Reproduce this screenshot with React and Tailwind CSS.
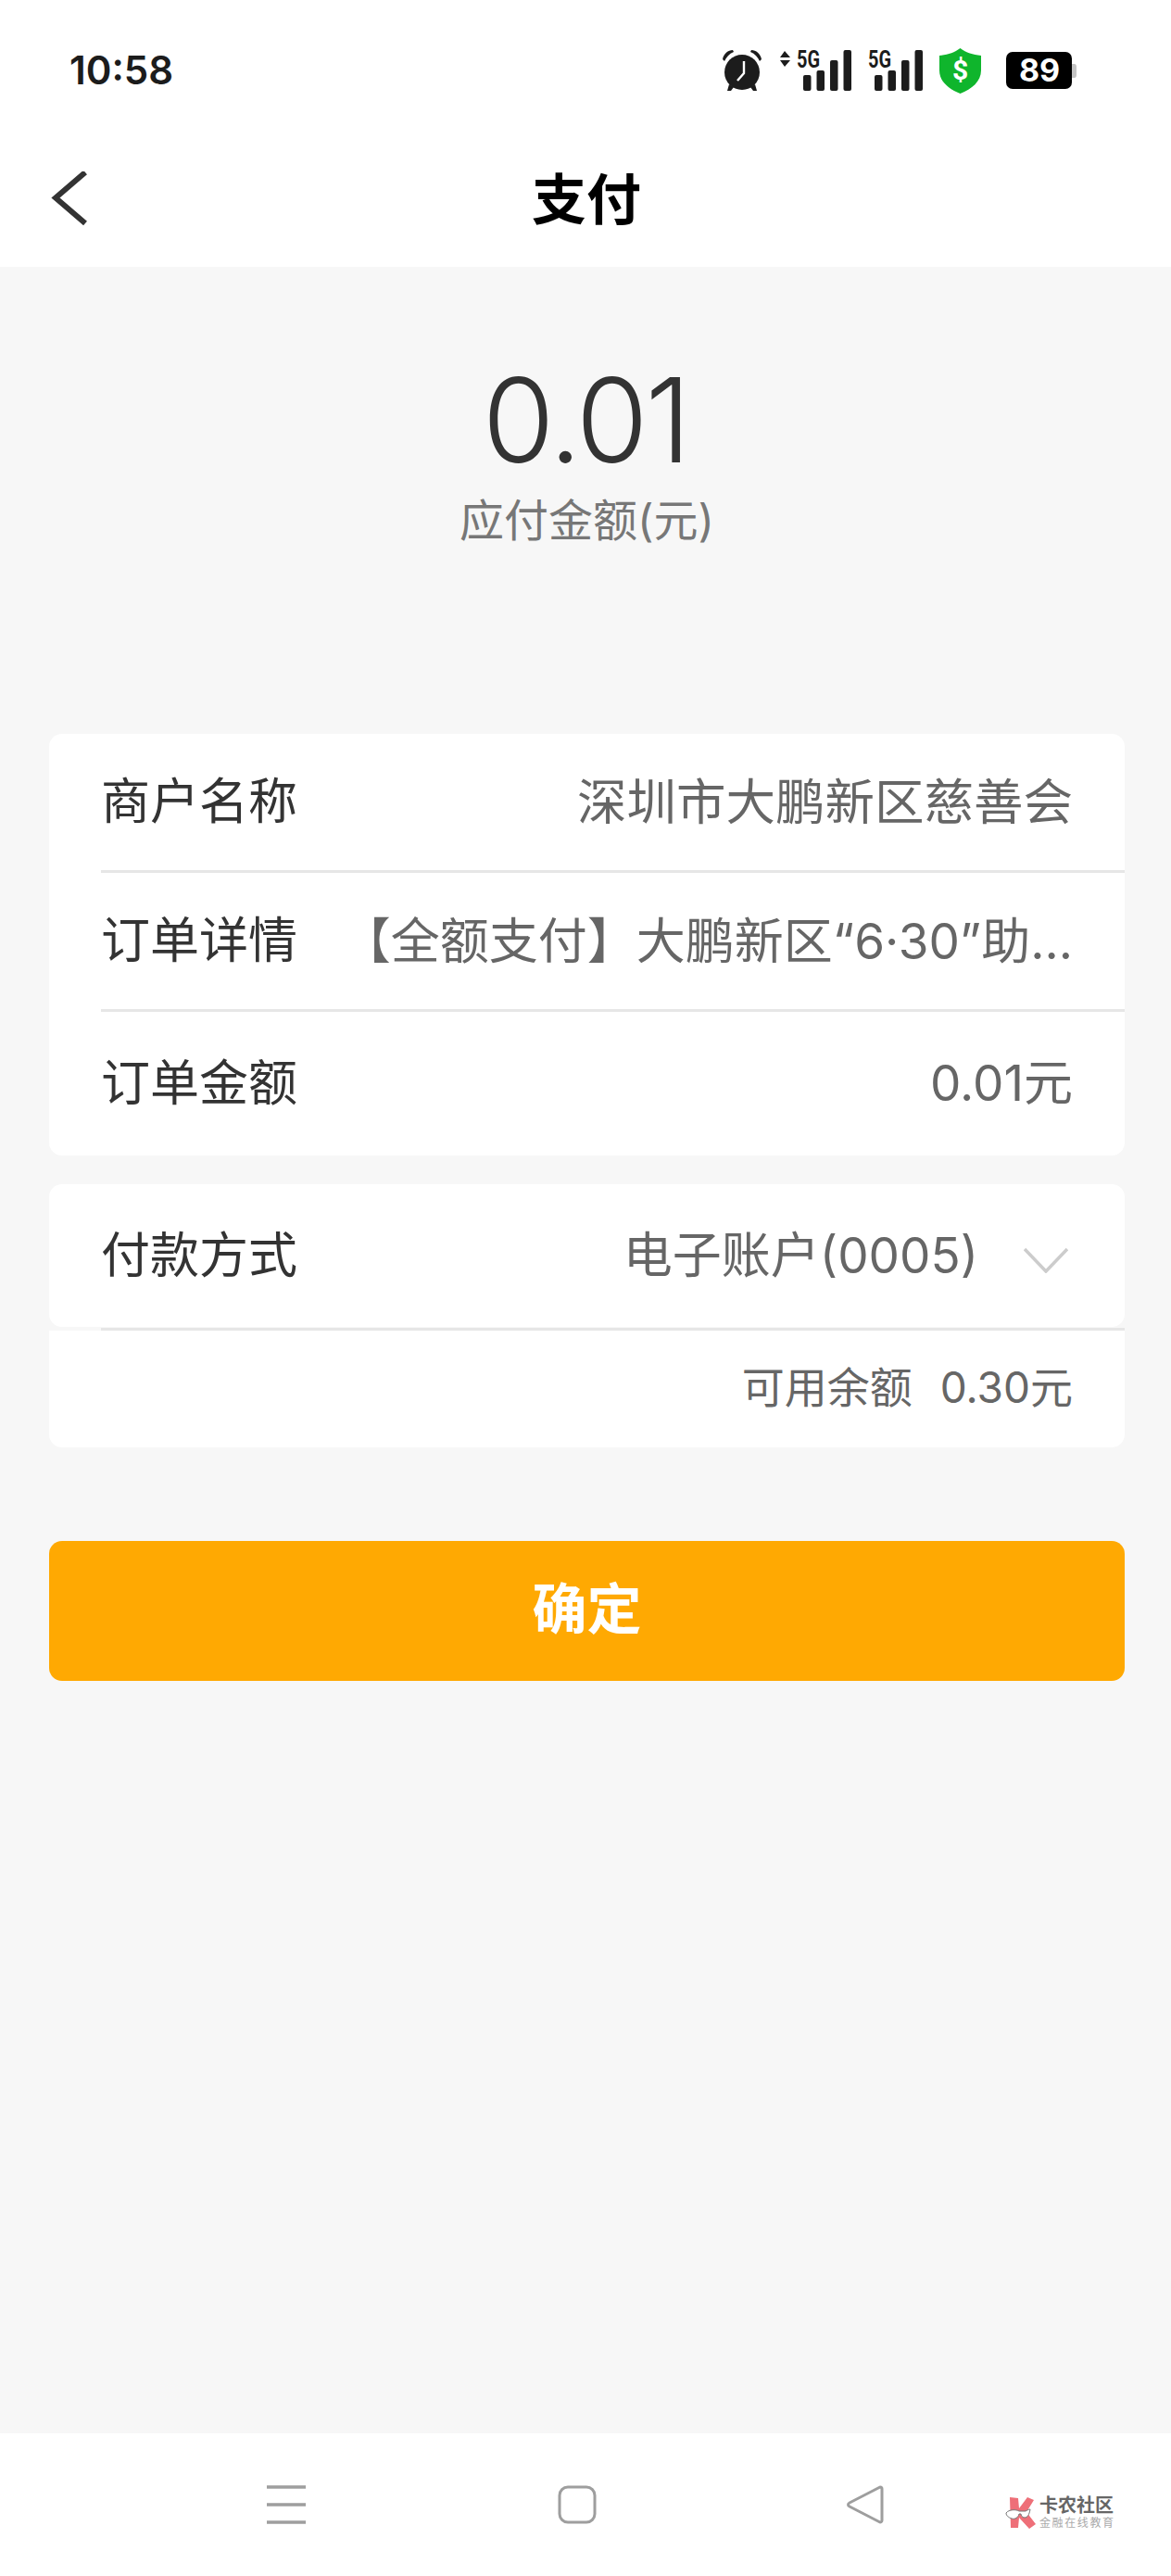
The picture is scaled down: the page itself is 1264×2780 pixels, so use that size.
const cjk = "font-['Inter','Noto_Sans_CJK_SC',sans-serif]";

function Alarm() {
  return (
    <svg width="44" height="46" viewBox="0 0 44 46" className="shrink-0">
      <circle cx="22" cy="25" r="19" fill="#1c1c1c" />
      <path d="M1 11 C2 5 7 1 12 1 L13 3 C8 5 5 9 3 13 Z" fill="#1c1c1c" />
      <path d="M43 11 C42 5 37 1 32 1 L31 3 C36 5 39 9 41 13 Z" fill="#1c1c1c" />
      <path d="M8 38 L6 45 L10 45 L13 41 Z M36 38 L38 45 L34 45 L31 41 Z" fill="#1c1c1c" />
      <path d="M24 13 L24 26 L17 34" fill="none" stroke="#fff" strokeWidth="2.4" />
    </svg>
  );
}

function Signal({ arrows }) {
  return (
    <svg width={arrows ? 77 : 59} height="52" viewBox={arrows ? "-18 -8 77 52" : "0 -8 59 52"} className="-mt-[8px] shrink-0">
      {arrows && <path d="M-13 1 L-7 8 L-18 8 Z M-18 11 L-7 11 L-13 18 Z" fill="#1c1c1c" />}
      <text x="0" y="19" fontFamily="Roboto, sans-serif" fontSize="25" fontWeight="700" fill="#1c1c1c" textLength="25" lengthAdjust="spacingAndGlyphs">
        5G
      </text>
      <rect x="7" y="27" width="8.5" height="17" rx="2" fill="#1c1c1c" />
      <rect x="21.5" y="22" width="8.5" height="22" rx="2" fill="#1c1c1c" />
      <rect x="36" y="11" width="8.5" height="33" rx="2" fill="#1c1c1c" />
      <rect x="50.5" y="0" width="8.5" height="44" rx="2" fill="#1c1c1c" />
    </svg>
  );
}

function Shield() {
  return (
    <svg width="45" height="49" viewBox="0 0 45 49" className="shrink-0">
      <path d="M22.5 0 C29 5 36 7 45 8 L45 24 C45 36 35 44 22.5 49 C10 44 0 36 0 24 L0 8 C9 7 16 5 22.5 0 Z" fill="#0fb52c" />
      <text x="22.5" y="34" textAnchor="middle" fontFamily="Roboto, sans-serif" fontSize="30" fontWeight="700" fill="#fff">
        $
      </text>
    </svg>
  );
}

function Battery() {
  return (
    <svg width="77" height="40" viewBox="0 0 77 40" className="shrink-0">
      <path d="M70 13 L73 13 C76 13 76 15 76 17 L76 24 C76 26 76 28 73 28 L70 28 Z" fill="#c4c4c4" />
      <rect x="0" y="0" width="71" height="40" rx="7" fill="#000" />
      <text x="36" y="32" textAnchor="middle" fontFamily="Inter, sans-serif" fontSize="34" fontWeight="700" fill="#fff">
        89
      </text>
    </svg>
  );
}

function Row({ label, height, children }) {
  return (
    <div className={`flex items-center px-[56px] ${height}`}>
      <span className="shrink-0 text-[53px] leading-none text-[#333]">{label}</span>
      {children}
    </div>
  );
}

function Divider() {
  return <div className="ml-[56px] h-[3px] bg-[#e6e6e6]" />;
}

export default function App() {
  return (
    <div className={`relative flex h-[2780px] w-[1264px] flex-col bg-[#f7f7f7] ${cjk}`}>
      <header className="h-[288px] shrink-0 bg-white">
        <div className="flex h-[152px] items-center pr-[101px] pl-[75px]">
          <span className="text-[42px] leading-none font-semibold text-[#1c1c1c]">10:58</span>
          <div className="ml-auto flex items-center">
            <Alarm />
            <div className="ml-[19px]">
              <Signal arrows />
            </div>
            <div className="ml-[18px]">
              <Signal />
            </div>
            <div className="ml-[18px]">
              <Shield />
            </div>
            <div className="ml-[27px]">
              <Battery />
            </div>
          </div>
        </div>
        <div className="flex h-[136px] items-center pb-[10px] pl-[54px]">
          <svg width="42" height="60" viewBox="0 0 42 60" fill="none" className="shrink-0">
            <path d="M38 1 L6 28.5 L38 56" stroke="#333" strokeWidth="6" />
          </svg>
          <h1 className="ml-[478px] text-[59px] leading-none font-bold text-black">支付</h1>
        </div>
      </header>

      <section className="flex h-[504px] shrink-0 flex-col items-center pt-[90px]">
        <div className="text-[126px] leading-[150px] font-light tracking-[-3px] text-[#333]">0.01</div>
        <div className="mt-[10px] pl-[3px] text-[48px] leading-none text-[#777]">应付金额(元)</div>
      </section>

      <div className="mr-[50px] ml-[53px] rounded-[14px] bg-white">
        <Row label="商户名称" height="h-[147px]">
          <span className="ml-auto text-[53.5px] leading-none text-[#666]">深圳市大鹏新区慈善会</span>
        </Row>
        <Divider />
        <Row label="订单详情" height="h-[147px]">
          <span className="ml-auto text-[53px] leading-[64px] whitespace-nowrap text-[#666]">
            【全额支付】大鹏新区“6·30”助...
          </span>
        </Row>
        <Divider />
        <Row label="订单金额" height="h-[155px]">
          <span className="ml-auto text-[53px] leading-none text-[#666]">0.01元</span>
        </Row>
      </div>

      <div className="mt-[31px] mr-[50px] ml-[53px]">
        <div className="flex h-[154px] items-center rounded-[14px] bg-white pr-[61px] pl-[56px]">
          <span className="shrink-0 text-[53px] leading-none text-[#333]">付款方式</span>
          <span className="ml-auto text-[53px] leading-none text-[#666]">电子账户(0005)</span>
          <svg width="48" height="28" viewBox="0 0 48 28" fill="none" className="mt-[10px] ml-[49px] shrink-0">
            <path d="M1 2 L24 26 L47 2" stroke="#ccc" strokeWidth="3.5" />
          </svg>
        </div>
        <div className="mt-[1px] ml-[56px] h-[3px] bg-[#e6e6e6]" />
        <div className="flex h-[126px] items-center justify-end rounded-b-[14px] bg-white pr-[56px] pb-[5px] text-[46px] leading-none text-[#666]">
          可用余额<span className="ml-[30px]">0.30元</span>
        </div>
      </div>

      <button className="mt-[101px] mr-[50px] ml-[53px] h-[151px] rounded-[14px] bg-[#ffa902] pb-[4px] text-[59px] leading-none font-bold text-white">
        确定
      </button>

      <footer className="relative mt-auto flex h-[154px] shrink-0 items-start bg-white pt-[56px] pl-[288px]">
        <svg width="42" height="42" viewBox="0 0 42 42" className="shrink-0">
          <path d="M0 2 H42 M0 21 H42 M0 40 H42" stroke="#9e9e9e" strokeWidth="3.5" />
        </svg>
        <svg width="42" height="42" viewBox="0 0 42 42" fill="none" className="ml-[272px] shrink-0">
          <rect x="2" y="2" width="38" height="38" rx="9" stroke="#9e9e9e" strokeWidth="3" />
        </svg>
        <svg width="40" height="42" viewBox="0 0 40 42" fill="none" className="ml-[270px] shrink-0">
          <path d="M36 2 C37.5 2 38 3 38 4 L38 38 C38 39.5 36.5 40.5 35 39.5 L3 23 C1 22 1 20 3 19 Z" stroke="#9e9e9e" strokeWidth="3" strokeLinejoin="round" />
        </svg>
        <div className="absolute top-[67px] left-[1085px] flex items-center">
          <svg width="38" height="34" viewBox="0 0 38 34" className="shrink-0">
            <path d="M5 0 L14 1 L15 12 L24 0 L31 3 L23 16 L33 29 L26 34 L15 22 L14 33 L6 33 Z" fill="#ee6f78" />
            <path d="M1 17 C4 13 12 13 15 15 L22 15 C25 13 27 13 27 13 C26 19 24 22 21 22 C18 22 17 19 17 18 L15 18 C14 22 11 24 7 23 C4 22 1 20 1 17 Z" fill="#fff" stroke="#777" strokeWidth="1" />
          </svg>
          <div className="-ml-[1px] flex w-[80px] flex-col">
            <span className="text-[20px] leading-[22px] font-bold text-[#666]">卡农社区</span>
            <span className="text-[12px] leading-[16px] tracking-[1.6px] whitespace-nowrap text-[#aaa]">金融在线教育</span>
          </div>
        </div>
      </footer>
    </div>
  );
}
